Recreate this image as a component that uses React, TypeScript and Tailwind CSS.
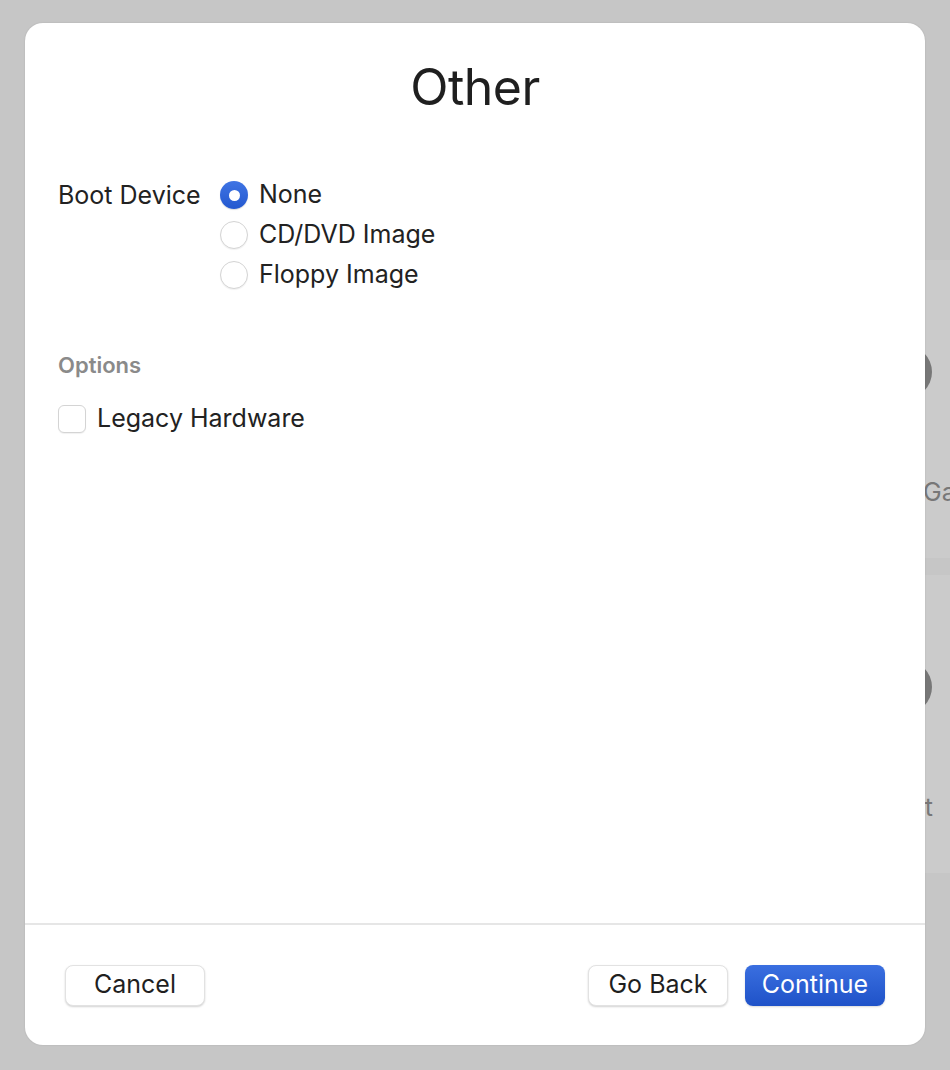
import { Check } from "lucide-react";

const FONT = { fontFamily: "Inter, 'Noto Sans', sans-serif" };

const BOOT_OPTIONS = ["None", "CD/DVD Image", "Floppy Image"];

function Radio({ checked }: { checked: boolean }) {
  return checked ? (
    <span className="w-[28px] h-[28px] rounded-full bg-gradient-to-b from-[#3f74e4] to-[#2458cf] flex items-center justify-center shrink-0 shadow-[0_1px_1px_rgba(0,0,0,0.15)]">
      <span className="w-[11px] h-[11px] rounded-full bg-white" />
    </span>
  ) : (
    <span className="w-[28px] h-[28px] rounded-full bg-white border border-[#d4d4d4] shrink-0 shadow-[0_1px_1px_rgba(0,0,0,0.06)]" />
  );
}

function BgCard({ label, alignEnd }: { label: string; alignEnd?: boolean }) {
  return (
    <div className="h-[298px] w-[400px] bg-[#cbcbcb] rounded-l-[14px] pt-[85px] pl-[278px]">
      <div className="w-[54px] h-[54px] rounded-full bg-[#777777]" />
      <div
        className={`mt-[78px] text-[25px] leading-[30px] text-[#777777] whitespace-nowrap ${alignEnd ? "w-[55px] text-right" : "ml-[45px]"}`}
        style={FONT}
      >
        {label}
      </div>
    </div>
  );
}

export default function App() {
  const selected = "None";
  return (
    <div className="relative w-full h-[1070px] bg-[#c6c6c6] overflow-hidden" style={FONT}>
      {/* page behind the sheet */}
      <div className="flex flex-col gap-[17px] pt-[260px] pl-[600px]">
        <BgCard label="Games" />
        <BgCard label="Test" alignEnd />
      </div>

      {/* sheet */}
      <div className="absolute left-[25px] top-[23px] w-[900px] h-[1022px] bg-white rounded-[18px] shadow-[0_0_2px_rgba(0,0,0,0.12)] flex flex-col">
        <h1 className="text-center text-[50px] leading-none text-[#1f1f1f] mt-[39px] tracking-[-0.5px]">Other</h1>

        <div className="flex-1 px-[33px] pt-[63px]">
          <div className="flex items-start">
            <span className="text-[25px] text-[#222] leading-[40px] w-[162px] shrink-0">Boot Device</span>
            <div className="flex flex-col">
              {BOOT_OPTIONS.map(o => (
                <label key={o} className="flex items-center h-[40px] gap-[11px]">
                  <Radio checked={o === selected} />
                  <span className="text-[25px] text-[#222]">{o}</span>
                </label>
              ))}
            </div>
          </div>

          <div className="mt-[54px] text-[22px] font-semibold text-[#8a8a8a]">Options</div>

          <label className="flex items-center gap-[11px] mt-[18px]">
            <span className="w-[28px] h-[28px] rounded-[6px] bg-white border border-[#d4d4d4] shadow-[0_1px_1px_rgba(0,0,0,0.06)] flex items-center justify-center">
              <Check className="w-4 h-4 text-white opacity-0" />
            </span>
            <span className="text-[25px] text-[#222]">Legacy Hardware</span>
          </label>
        </div>

        {/* footer */}
        <div className="border-t-2 border-[#e6e6e6] h-[122px] flex items-center px-[40px]">
          <button className="w-[140px] h-[41px] rounded-[8px] bg-white border border-[#e2e2e2] shadow-[0_1px_2px_rgba(0,0,0,0.18)] text-[25px] text-[#1f1f1f]">
            Cancel
          </button>
          <div className="ml-auto flex gap-[17px]">
            <button className="w-[140px] h-[41px] rounded-[8px] bg-white border border-[#e2e2e2] shadow-[0_1px_2px_rgba(0,0,0,0.18)] text-[25px] text-[#1f1f1f]">
              Go Back
            </button>
            <button className="w-[140px] h-[41px] rounded-[8px] bg-gradient-to-b from-[#3a6fe0] to-[#1f52c8] shadow-[0_1px_2px_rgba(0,0,0,0.15)] text-[25px] text-white">
              Continue
            </button>
          </div>
        </div>
      </div>
    </div>
  );
}
